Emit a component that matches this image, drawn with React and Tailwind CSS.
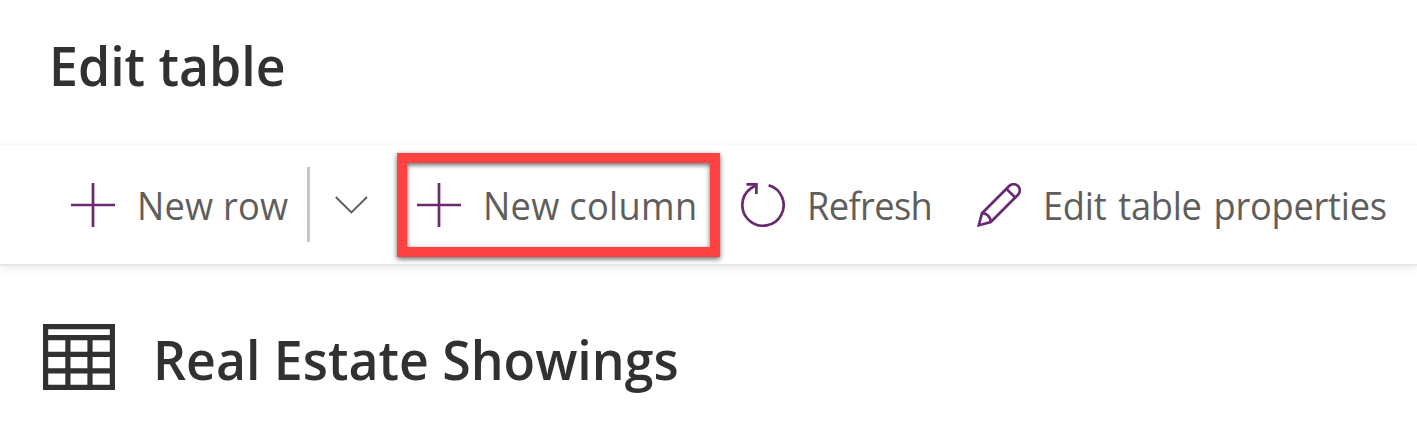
const PURPLE = "#692a72";

function PlusIcon() {
  return (
    <svg className="block h-11 w-11 shrink-0" viewBox="0 0 44 44" fill="none" stroke={PURPLE} strokeWidth="2.7">
      <path d="M0 22H44M22 0V44" />
    </svg>
  );
}

function ChevronIcon() {
  return (
    <svg className="block h-[18px] w-[33px] shrink-0" viewBox="0 0 33 18" fill="none" stroke="#605e5c" strokeWidth="1.9">
      <path d="M0.8 1L16.4 16.4L32 1" />
    </svg>
  );
}

function RefreshIcon() {
  return (
    <svg className="block h-11 w-11 shrink-0" viewBox="0 0 44 44" fill="none" stroke={PURPLE} strokeWidth="2.7">
      <path d="M27.6 2.2A20.65 20.65 0 1 1 9.5 5.6L15.4 2" />
      <path d="M5.5 1.4H15.4V11" />
    </svg>
  );
}

function PencilIcon() {
  return (
    <svg className="block h-11 w-11 shrink-0" viewBox="0 0 44 44" fill="none" stroke={PURPLE} strokeWidth="2.7" strokeLinejoin="miter">
      <path d="M1.8 42.2L5 30.2L32.2 3A6.2 6.2 0 0 1 41 11.8L13.8 39L1.8 42.2Z" />
      <path d="M5 30.2C10 30.4 13.6 34 13.8 39" />
      <path d="M29.4 5.8L38.2 14.6" />
    </svg>
  );
}

function TableIcon() {
  return (
    <svg className="block h-[66px] w-[72px] shrink-0" viewBox="0 0 72 66" fill="none" stroke="#323130" strokeWidth="5.2">
      <path d="M2.6 2.6H69.4V63.4H2.6Z" />
      <path d="M2 13.6H70M2 30.4H70M2 46.9H70M24.9 13V64M47 13V64" />
    </svg>
  );
}

export default function App() {
  return (
    <div className="flex h-[435px] w-[1417px] flex-col overflow-hidden bg-white font-['Open_Sans','Noto_Sans',sans-serif] whitespace-nowrap">
      <header className="flex h-[144px] shrink-0 items-start pt-[29px] pl-[49px]">
        <h1 className="origin-left scale-x-95 text-[54.5px] leading-[72px] font-semibold text-[#323130]">Edit table</h1>
      </header>

      <nav className="relative flex h-[122px] shrink-0 items-start border-t border-b-2 border-t-[#f9f9f9] border-b-[#e8e8e8] bg-white pt-[8px] text-[39px] leading-[52px] text-[#605e5c] shadow-[0_3px_8px_rgba(0,0,0,0.07)]">
        <button className="flex h-[104px] w-[307px] shrink-0 items-center pl-[71px]">
          <PlusIcon />
          <span className="ml-[22px] origin-left scale-x-93 tracking-[0.2px]">New row</span>
        </button>
        <div className="mt-[14px] h-[75px] w-[3px] shrink-0 bg-[#c8c6c4]" />
        <button className="flex h-[104px] w-[87px] shrink-0 items-center pl-[25px]">
          <ChevronIcon />
        </button>
        <button className="relative flex h-[104px] w-[323px] shrink-0 items-center border-[10px] border-[#ff4343] pl-[10px] shadow-[0_2px_5px_rgba(0,0,0,0.6),inset_0_2px_5px_rgba(0,0,0,0.6)]">
          <PlusIcon />
          <span className="ml-[22px] origin-left scale-x-93 tracking-[0.3px]">New column</span>
        </button>
        <button className="flex h-[104px] w-[236px] shrink-0 items-center pl-[21px]">
          <RefreshIcon />
          <span className="ml-[22px] origin-left scale-x-93 tracking-[-0.7px]">Refresh</span>
        </button>
        <button className="flex h-[104px] shrink-0 items-center pl-[21px]">
          <PencilIcon />
          <span className="ml-[22px] origin-left scale-x-93 tracking-[-0.3px] [word-spacing:3px]">Edit table properties</span>
        </button>
      </nav>

      <main className="flex items-start pt-[58px] pl-[43px]">
        <TableIcon />
        <h2 className="-mt-px ml-[38px] origin-left scale-x-95 text-[54.5px] leading-[72px] font-semibold text-[#323130]">Real Estate Showings</h2>
      </main>
    </div>
  );
}
